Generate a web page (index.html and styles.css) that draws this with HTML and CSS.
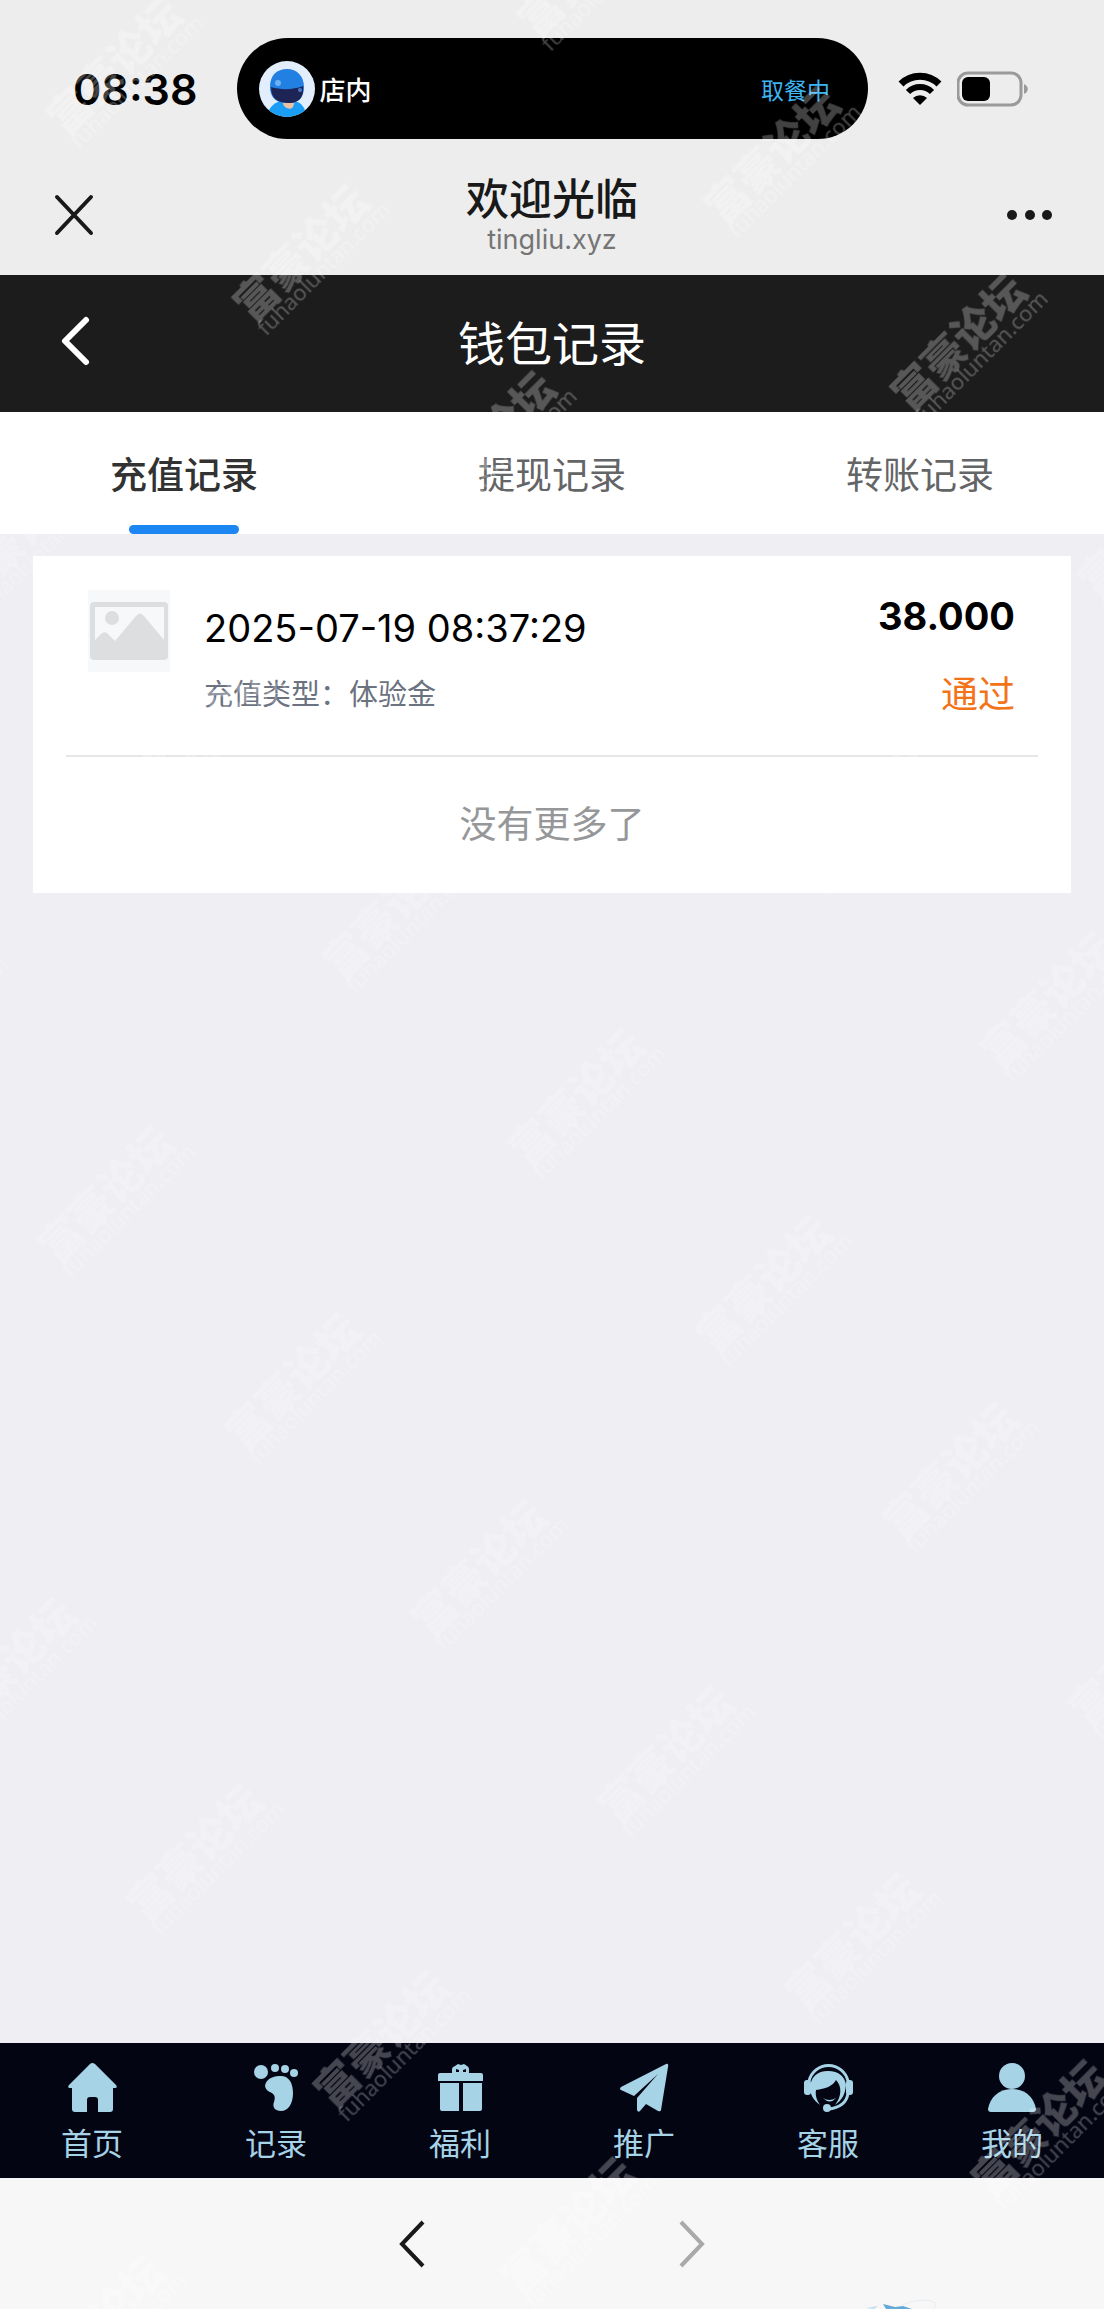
FILE: index.html
```html
<!DOCTYPE html>
<html lang="zh-CN">

<head>
    <meta charset="UTF-8">
    <meta name="viewport" content="width=device-width, initial-scale=1">
    <title>钱包记录</title>
    <link rel="stylesheet" href="styles.css">
</head>

<body>
    <div class="page">
        <header class="top">
            <div class="status-bar">
                <span class="time">08:38</span>
                <div class="island">
                    <svg class="avatar" viewBox="0 0 56 56" aria-hidden="true">
                        <clipPath id="avatar-clip"><circle cx="28" cy="28" r="28" /></clipPath>
                        <g clip-path="url(#avatar-clip)">
                            <rect width="56" height="56" fill="#e3eefc" />
                            <path d="M8 56C10 44 17 41 23 40h12c7 1 11 6 13 16z" fill="#1b9df6" />
                            <path d="M22 38l14 2-2 6c-2 3-6 2-9-1z" fill="#e9c3a4" />
                            <path d="M11 26C11 14 18 8 28 8s17 7 17 18c0 9-4 16-15 16C17 43 11 36 11 26z" fill="#2280e2" />
                            <path d="M12 26c10 3 22 3 32-1 1 9-2 17-14 17S12 37 12 26z" fill="#1d2557" />
                            <circle cx="19" cy="22" r="3" fill="#6cb2f2" />
                            <circle cx="41" cy="29" r="2" fill="#4b79c9" />
                        </g>
                    </svg>
                    <span class="island-title">店内</span>
                    <span class="island-state">取餐中</span>
                </div>
                <svg class="wifi" viewBox="0 0 44 34" aria-hidden="true">
                    <path d="M3 12a27 27 0 0 1 38 0" fill="none" stroke="#000" stroke-width="7" />
                    <path d="M10 20a17 17 0 0 1 24 0" fill="none" stroke="#000" stroke-width="6" />
                    <path d="M15 26a10 10 0 0 1 14 0l-7 7z" />
                </svg>
                <svg class="battery" viewBox="0 0 72 36" aria-hidden="true">
                    <rect x="1" y="2" width="63" height="32" rx="10" fill="none" stroke="#9a9a9a" stroke-width="3" />
                    <rect x="5" y="6" width="28" height="24" rx="6" />
                    <path d="M67 13c5 2 5 8 0 10z" fill="#9a9a9a" />
                </svg>
            </div>
            <div class="browser-bar">
                <button class="icon-button" type="button" aria-label="关闭">
                    <svg width="44" height="44" viewBox="0 0 44 44"><path d="M5 4l34 36M39 4L5 40" fill="none" stroke="#191919" stroke-width="4" stroke-linecap="round" /></svg>
                </button>
                <div class="site">
                    <div class="site-name">欢迎光临</div>
                    <div class="site-host">tingliu.xyz</div>
                </div>
                <button class="icon-button more" type="button" aria-label="更多">
                    <svg width="46" height="44" viewBox="0 0 46 44" fill="#191919"><circle cx="6" cy="22" r="5" /><circle cx="24" cy="22" r="5" /><circle cx="41" cy="22" r="5" /></svg>
                </button>
            </div>
        </header>

        <div class="nav-bar">
            <a class="back" href="#" aria-label="返回">
                <svg width="32" height="52" viewBox="0 0 32 52"><path d="M26 5L5 26l21 21" fill="none" stroke="#fff" stroke-width="6" stroke-linecap="round" stroke-linejoin="round" /></svg>
            </a>
            <h1>钱包记录</h1>
        </div>

        <div class="tabs" role="tablist">
            <button class="tab active" type="button" role="tab" aria-selected="true">充值记录</button>
            <button class="tab" type="button" role="tab" aria-selected="false">提现记录</button>
            <button class="tab" type="button" role="tab" aria-selected="false">转账记录</button>
        </div>

        <main class="content">
            <div class="card">
                <div class="record">
                    <svg class="thumb" viewBox="0 0 82 82" aria-hidden="true">
                        <rect width="82" height="82" fill="#f7f8fa" />
                        <rect x="2" y="12" width="78" height="58" rx="4" fill="#dcdee0" />
                        <path d="M7 17h69v33L56 26q-4-5-8 0L27 51l-7-7q-4-4-8 1l-5 5z" fill="#f7f8fa" />
                        <circle cx="24" cy="28" r="7" fill="#dcdee0" />
                    </svg>
                    <div class="record-info">
                        <div class="record-date">2025-07-19 08:37:29</div>
                        <div class="record-type">充值类型：体验金</div>
                    </div>
                    <div class="record-result">
                        <div class="record-amount">38.000</div>
                        <div class="record-status">通过</div>
                    </div>
                </div>
                <p class="finished">没有更多了</p>
            </div>
        </main>

        <nav class="tabbar">
            <a class="tabbar-item" href="#">
                <svg viewBox="0 0 49 49"><path d="M22 1q2-2 5 0l21 21q2 3-1 3h-2v21q0 3-3 3H30V37q0-3-3-3h-5q-3 0-3 3v12H7q-3 0-3-3V25H2q-3 0-1-3z" /></svg>
                首页
            </a>
            <a class="tabbar-item" href="#">
                <svg viewBox="0 0 49 49"><circle cx="9" cy="9" r="7" /><circle cx="23" cy="5" r="4" /><circle cx="33" cy="6" r="4" /><circle cx="42" cy="10" r="4" /><path d="M27 13c10-1 14 7 14 17 0 11-5 18-12 18-6 0-9-4-7-9 2-6 0-8-4-10-9-4-5-15 9-16z" /></svg>
                记录
            </a>
            <a class="tabbar-item" href="#">
                <svg viewBox="0 0 49 49"><path d="M2 12q0-2 2-2h12V6q0-2 3-3l3-2 3 1 3-1 3 2q2 1 2 3v4h12q2 0 2 2v6H2zM20 6v3h3V7zm10 0-3 1v2h3zM4 20h19v28H6q-2 0-2-2zM27 20h19v26q0 2-2 2H27z" fill-rule="evenodd" /></svg>
                福利
            </a>
            <a class="tabbar-item" href="#">
                <svg viewBox="0 0 49 49"><path d="M1 24L46 1q3-1 2 3l-7 43q0 2-3 1l-12-7-6 7q-2 2-3-1V35L38 11 14 33 1 27q-2-1 0-3z" /></svg>
                推广
            </a>
            <a class="tabbar-item" href="#">
                <svg viewBox="0 0 49 49"><path d="M5 18a20 20 0 0 1 39 0M44 30c-1 9-8 15-20 16" fill="none" stroke="#a6d3e6" stroke-width="3" /><rect y="17" width="7" height="15" rx="3" /><rect x="42" y="17" width="7" height="15" rx="3" /><path d="M24 8c11 0 17 6 18 14-1 10-4 15-11 20 7-9 7-19 1-25-3 6-11 9-20 10-1 6 1 10 4 15C9 37 6 31 6 24 7 14 13 8 24 8z" /><path d="M19 35q6 4 13 0-6 7-13 0z" /><circle cx="23" cy="45" r="4" /></svg>
                客服
            </a>
            <a class="tabbar-item" href="#">
                <svg viewBox="0 0 49 49"><circle cx="24" cy="13" r="13" /><path d="M24 26c14 0 22 9 24 20q0 3-3 3H3q-3 0-3-3C2 35 10 26 24 26z" /></svg>
                我的
            </a>
        </nav>

        <footer class="browser-nav">
            <button class="icon-button" type="button" aria-label="后退">
                <svg width="30" height="52" viewBox="0 0 30 52"><path d="M25 4L4 26l21 22" fill="none" stroke="#191919" stroke-width="4" /></svg>
            </button>
            <button class="icon-button" type="button" aria-label="前进" disabled>
                <svg width="30" height="52" viewBox="0 0 30 52"><path d="M5 4l21 22L5 48" fill="none" stroke="#a9a9a9" stroke-width="4" /></svg>
            </button>
            <svg class="corner-logo" viewBox="0 0 72 12" aria-hidden="true">
                <path d="M0 11l12-2-4 3z" fill="#c3def0" />
                <path d="M17 7l12 3 8-1 9 3H20z" fill="#64a9d8" />
                <path d="M36 8q22-9 34-2l-2 6" fill="none" stroke="#e6edf2" />
            </svg>
        </footer>

        <!-- 水印 -->
        <svg class="watermark" aria-hidden="true">
            <defs>
                <pattern id="mark" width="402" height="264" patternUnits="userSpaceOnUse" patternTransform="translate(501 1140) rotate(-45)">
                    <text class="mark-name" x="0" y="39">富豪论坛</text>
                    <text class="mark-url" x="0" y="58">fuhaoluntan.com</text>
                </pattern>
            </defs>
            <rect width="100%" height="100%" fill="url(#mark)" />
        </svg>
    </div>
</body>

</html>
```
FILE: styles.css
```css
* {
    box-sizing: border-box;
}

body {
    margin: 0;
    font-family: Inter, "Noto Sans CJK SC", sans-serif;
    background-color: #eeeef3;
}

button {
    font-family: inherit;
    background: none;
    border: none;
    padding: 0;
    cursor: pointer;
}

svg {
    display: block;
    flex-shrink: 0;
}

.page {
    position: relative;
    display: flex;
    flex-direction: column;
    min-height: 100vh;
}

/* 手机状态栏 */
.top {
    background-color: #ededed;
}

.status-bar {
    display: flex;
    align-items: center;
    padding: 38px 75px 0 73px;
}

.time {
    font-size: 43px;
    font-weight: 600;
    line-height: 50px;
    margin-right: 39px;
}

.island {
    flex: 1;
    display: flex;
    align-items: center;
    height: 101px;
    padding: 0 38px 0 22px;
    border-radius: 51px;
    background-color: #000;
    color: #fff;
}

.avatar {
    width: 56px;
    height: 56px;
    margin-right: 5px;
}

.island-title {
    font-size: 26px;
    font-weight: 500;
}

.island-state {
    margin-left: auto;
    font-size: 23px;
    color: #3db5f2;
}

.wifi {
    width: 44px;
    height: 34px;
    margin: 0 15px 0 30px;
}

.battery {
    width: 72px;
    height: 36px;
}

.browser-bar {
    display: grid;
    grid-template-columns: 1fr auto 1fr;
    align-items: center;
    padding: 35px 52px 19px;
}

.icon-button {
    justify-self: start;
}

.more {
    justify-self: end;
}

.site {
    text-align: center;
}

.site-name {
    font-size: 43px;
    font-weight: 500;
    line-height: 50px;
    color: #191919;
}

.site-host {
    font-size: 27px;
    line-height: 32px;
    color: #757575;
}

/* 标题栏 */
.nav-bar {
    display: grid;
    grid-template-columns: 1fr auto 1fr;
    align-items: center;
    height: 137px;
    padding: 0 60px 6px;
    background-color: #1c1c1c;
    color: #fff;
}

.nav-bar h1 {
    margin: 0;
    font-size: 47px;
    font-weight: 400;
}

.tabs {
    display: flex;
    height: 122px;
    background-color: #fff;
}

.tab {
    flex: 1;
    position: relative;
    font-size: 37px;
    color: #646566;
}

.tab.active {
    font-weight: 500;
    color: #323233;
}

.tab.active::after {
    content: "";
    position: absolute;
    left: 50%;
    bottom: 0;
    width: 110px;
    height: 9px;
    margin-left: -55px;
    border-radius: 5px;
    background-color: #1c86f2;
}

/* 记录列表 */
.content {
    flex: 1;
    padding: 22px 33px;
}

.card {
    padding: 0 33px;
    background-color: #fff;
}

.record {
    display: flex;
    padding: 34px 23px 36px 22px;
    border-bottom: 2px solid #e6e6e8;
}

.thumb {
    width: 82px;
    height: 82px;
}

.record-info {
    flex: 1;
    padding-top: 12px;
    margin-left: 34px;
}

.record-date {
    font-size: 38px;
    line-height: 52px;
}

.record-type {
    margin-top: 21px;
    font-size: 29px;
    line-height: 40px;
    color: #6b7280;
}

.record-result {
    text-align: right;
}

.record-amount {
    font-size: 38px;
    font-weight: 700;
    line-height: 52px;
}

.record-status {
    margin-top: 29px;
    font-size: 37px;
    line-height: 48px;
    color: #f27318;
}

.finished {
    margin: 0;
    font-size: 37px;
    line-height: 136px;
    text-align: center;
    color: #969799;
}

/* 底部导航 */
.tabbar {
    display: flex;
    height: 135px;
    background-color: #040513;
}

.tabbar-item {
    flex: 1;
    display: flex;
    flex-direction: column;
    align-items: center;
    gap: 10px;
    padding-top: 20px;
    font-size: 31px;
    line-height: 44px;
    color: #a6d3e6;
    text-decoration: none;
}

.tabbar-item svg {
    width: 49px;
    height: 49px;
    fill: #a6d3e6;
}

.browser-nav {
    position: relative;
    display: flex;
    justify-content: center;
    align-items: center;
    gap: 248px;
    height: 131px;
    background-color: #f7f7f7;
}

.corner-logo {
    position: absolute;
    right: 15%;
    bottom: 0;
    width: 72px;
    height: 12px;
}

.watermark {
    position: absolute;
    inset: 0;
    width: 100%;
    height: 100%;
    pointer-events: none;
}

.mark-name,
.mark-url {
    fill: #fff;
    fill-opacity: 0.26;
}

.mark-name {
    font-family: "Noto Sans CJK SC", sans-serif;
    font-size: 42px;
    font-weight: 900;
}

.mark-url {
    font-family: "Noto Sans", sans-serif;
    font-size: 22px;
}
```
